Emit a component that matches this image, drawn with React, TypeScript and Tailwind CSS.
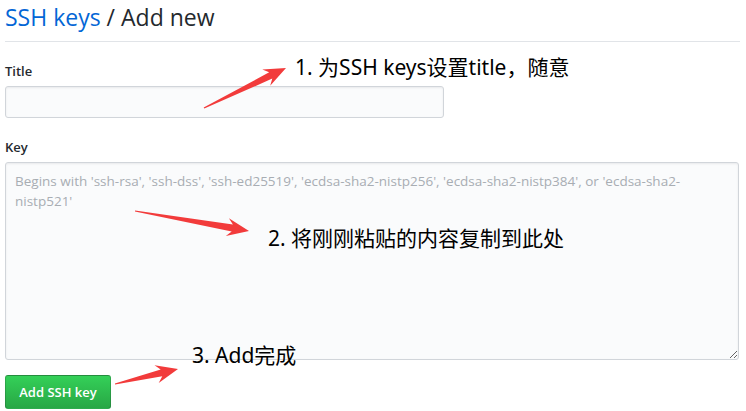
import React from "react";

function Arrow({ x1, y1, x2, y2 }: { x1: number; y1: number; x2: number; y2: number }) {
  const dx = x2 - x1;
  const dy = y2 - y1;
  const len = Math.sqrt(dx * dx + dy * dy);
  const ux = dx / len;
  const uy = dy / len;
  const px = -uy;
  const py = ux;
  const headLen = 22;
  const headW = 9;
  const neckW = 3.5;
  const tailW = 0.6;
  const bx = x2 - ux * headLen;
  const by = y2 - uy * headLen;
  const nx = x2 - ux * (headLen - 5);
  const ny = y2 - uy * (headLen - 5);
  const pts = [
    [x1 + px * tailW, y1 + py * tailW],
    [nx + px * neckW, ny + py * neckW],
    [bx + px * headW, by + py * headW],
    [x2, y2],
    [bx - px * headW, by - py * headW],
    [nx - px * neckW, ny - py * neckW],
    [x1 - px * tailW, y1 - py * tailW],
  ]
    .map((p) => `${p[0].toFixed(1)},${p[1].toFixed(1)}`)
    .join(" ");
  return <polygon points={pts} fill="#f23b3b" />;
}

export default function App() {
  const sans = { fontFamily: '"Open Sans", "Noto Sans", sans-serif' };
  const cjk = { fontFamily: '"Noto Sans", "Noto Sans CJK SC", sans-serif' };
  return (
    <div className="relative w-[746px] h-[411px] bg-white overflow-hidden pl-[5px] pr-[6px]" style={sans}>
      <div className="h-[42px] border-b border-[#e1e4e8] flex items-start pt-[1px]">
        <h2 className="text-[23px] leading-[32px] font-normal text-[#24292e]">
          <span className="text-[#0366d6]">SSH keys</span> / Add new
        </h2>
      </div>
      <div className="pt-[19px]">
        <label className="block text-[13px] leading-[20px] font-semibold text-[#24292e]">Title</label>
        <input
          className="mt-[5px] block w-[439px] h-[32px] bg-[#fafbfc] border border-[#d1d5da] rounded-[3px] shadow-[inset_0_1px_2px_rgba(27,31,35,0.075)] px-2 text-[13px] outline-none"
        />
      </div>
      <div className="pt-[19px]">
        <label className="block text-[13px] leading-[20px] font-semibold text-[#24292e]">Key</label>
        <textarea
          className="mt-[5px] block w-[734px] h-[198px] bg-[#fafbfc] border border-[#d1d5da] rounded-[3px] shadow-[inset_0_1px_2px_rgba(27,31,35,0.075)] px-[9px] py-[8px] text-[13.5px] leading-[20px] text-[#24292e] placeholder:text-[#a8adb3] outline-none resize-y"
          placeholder="Begins with 'ssh-rsa', 'ssh-dss', 'ssh-ed25519', 'ecdsa-sha2-nistp256', 'ecdsa-sha2-nistp384', or 'ecdsa-sha2-nistp521'"
        />
      </div>
      <div className="pt-[15px]">
        <button className="h-[34px] px-[10px] w-[106px] rounded-[3px] border border-[rgba(27,31,35,0.2)] bg-gradient-to-b from-[#34d058] to-[#28a745] text-white text-[13px] font-semibold leading-[20px] whitespace-nowrap">
          Add SSH key
        </button>
      </div>

      <svg className="absolute left-0 top-0 pointer-events-none" width="746" height="411">
        <Arrow x1={204} y1={108} x2={286} y2={68} />
        <Arrow x1={135} y1={211} x2={249} y2={231} />
        <Arrow x1={115} y1={384} x2={178} y2={369} />
      </svg>
      <div className="absolute left-[295px] top-[54px] text-[21px] leading-[27px] text-black whitespace-nowrap" style={cjk}>
        1. 为SSH keys设置title，随意
      </div>
      <div className="absolute left-[268px] top-[225px] text-[21px] leading-[27px] text-black whitespace-nowrap" style={cjk}>
        2. 将刚刚粘贴的内容复制到此处
      </div>
      <div className="absolute left-[192px] top-[342px] text-[21px] leading-[27px] text-black whitespace-nowrap" style={cjk}>
        3. Add完成
      </div>
    </div>
  );
}
